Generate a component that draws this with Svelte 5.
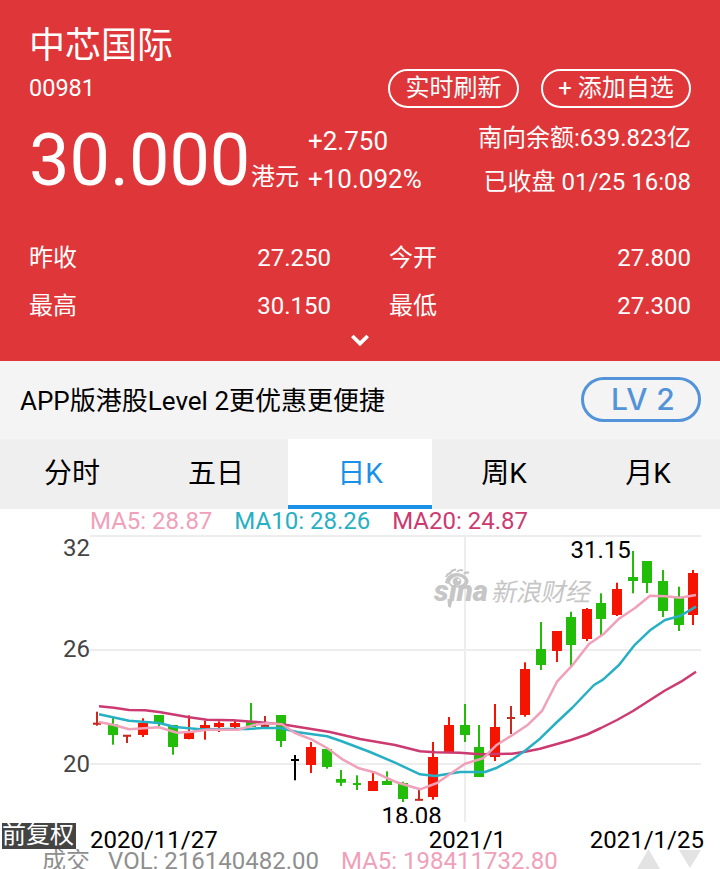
<script>
  const stats = [
    ['昨收', '27.250'], ['今开', '27.800'],
    ['最高', '30.150'], ['最低', '27.300'],
  ];
  const tabs = ['分时', '五日', '日K', '周K', '月K'];
  const active = 2;
  const legend = [
    { text: 'MA5: 28.87', color: '#f0a0b9' },
    { text: 'MA10: 28.26', color: '#27b0c4' },
    { text: 'MA20: 24.87', color: '#cc3a70' },
  ];
  const R = '#f51400', G = '#22bd08', D = '#c82a20', K = '#000';
  // x, wick top, wick bottom, body top, body bottom, colour
  const candles = [
    [97, 711.7, 725.7, 722.6, 724.8, D], [113, 718, 744.7, 724.3, 735, G],
    [127, 735, 743, 734.7, 736.8, D], [143, 718.3, 737, 723, 735, R],
    [159, 715, 726, 715, 723, G], [173, 725, 754.7, 725, 747, G],
    [189, 715.3, 739.3, 732.3, 739, R], [205, 720.7, 739.7, 725, 728.7, R],
    [219, 721.3, 732, 723, 727, R], [235, 720.7, 728, 723, 727, R],
    [251, 703, 727, 721, 727, G], [265, 716, 726.7, 725, 727, D],
    [281, 715, 747, 715, 741, G], [295, 755, 780.3, 759, 761, K],
    [311, 742, 773, 747, 765, R], [327, 749, 768.7, 749, 767, G],
    [341, 770, 786, 779, 782.7, G], [357, 775.3, 790, 783, 785, G],
    [373, 773, 791, 781, 791, R], [387, 771.3, 785, 781, 785, G],
    [403, 781.7, 802, 783, 799, G], [419, 790, 800.3, 798.8, 800.8, D],
    [433, 742, 799.7, 757, 797, R], [449, 717, 752, 725, 752, R],
    [465, 704, 742, 725, 735, G], [479, 725, 777, 747, 777, G],
    [495, 704, 761, 727, 757, R], [511, 706, 734, 717, 719, D],
    [525, 662.3, 716.7, 669, 715, R], [541, 622, 670, 649, 665, G],
    [557, 631, 662, 631, 651, R], [571, 611.7, 667, 617, 645, G],
    [587, 608, 641, 609, 639, R], [601, 593.3, 635, 603, 619, G],
    [617, 582.7, 616, 589, 615, R], [633, 551, 593.3, 577, 581, G],
    [647, 561, 593, 561, 583, G], [663, 570, 617, 581, 611, G],
    [679, 586.7, 631, 597, 625, G], [693, 570, 625, 573, 615, R],
  ];
  const lines = [
    { color: '#cc3a72', pts: '99,706.3 114,707.7 129,710 145,710.3 159,712 175,714.7 189,717.3 207,719.7 233,720.3 265,722.7 285,724.7 330,732 360,739 395,745 420,751.3 435,752.3 460,752.7 480,754.3 512,753.7 525,751.7 540,748.7 557,744 571,740 587,734.5 601,728 617,720 633,711 647,702 665,690.5 681,681.7 696,671.7' },
    { color: '#27b0c4', pts: '99,714.3 129,720.7 159,723 175,727 200,729.3 233,729 248,729 263,728 280,728 298,732.3 327,736.3 341,741 370,752 395,762.7 420,774.3 435,776 460,772 485,772 497,767.7 513,759 525,750.7 540,738.7 556,723 572,708 594,685 603,679.7 619,665 634,645.7 650,630.3 665,620 680,616 696,606.7' },
    { color: '#f0a0b9', pts: '99,722 113,724.7 129,729.3 159,727.3 177,732.7 192,731.7 207,729.7 238,729.7 255,724.7 267,723.3 282,724.3 295,733 312,739.7 327,748 343,759.7 359,768.3 375,772.5 395,781.7 420,789.3 437,783 465,763.7 483,758.3 497,744.7 513,734.7 528,724.7 542,711 557,681.7 572,665.7 589,644 604,633.7 619,618.7 635,608 650,595.7 665,596.3 680,597.7 696,595' },
  ];
</script>

<div class="app">
  <header>
    <div class="name">中芯国际</div>
    <div class="code-row">
      <span class="code">00981</span>
      <button class="refresh">实时刷新</button>
      <button class="add">+ 添加自选</button>
    </div>
    <div class="quote">
      <div class="price">30.000</div>
      <div class="unit">港元</div>
      <div class="change"><span>+2.750</span><span>+10.092%</span></div>
      <div class="info"><span>南向余额:639.823亿</span><span>已收盘 01/25 16:08</span></div>
    </div>
    <div class="stats">
      {#each stats as [label, value]}
        <div class="stat"><span>{label}</span><span>{value}</span></div>
      {/each}
    </div>
    <svg class="chevron" width="20" height="14" viewBox="0 0 20 14"><path d="M2.3 2 10 9.5 17.7 2" fill="none" stroke="#fff" stroke-width="3.8" /></svg>
  </header>

  <div class="promo">
    <span class="slogan">APP版港股Level 2更优惠更便捷</span>
    <span class="lv">LV 2</span>
  </div>

  <nav>
    {#each tabs as tab, i}
      <div class="tab" class:active={i === active}>{tab}</div>
    {/each}
  </nav>

  <div class="legend">
    {#each legend as l}<span style="color:{l.color}">{l.text}</span>{/each}
  </div>

  <svg class="chart" width="720" height="290" viewBox="0 533 720 290">
    <g stroke="#ededed" stroke-width="2">
      <path d="M90 536H701M90 650H701M90 764H701M465 536V822" />
    </g>
    <g class="mark" fill="#c6c6c6">
      <text class="sina" x="434" y="601" textLength="54" lengthAdjust="spacingAndGlyphs">sına</text>
      <path d="M447.5 599H453L450.5 608 448 606.5Z" />
      <path fill-rule="evenodd" d="M445 583C446 574 455 571 462 574 469 577 470 582 467 585 462 589 450 588 449 584ZM450 582C451 587 462 588 465 581 462 575 453 575 450 582Z" />
      <circle cx="457" cy="581.5" r="4.3" />
      <circle cx="458.5" cy="580" r="1.2" fill="#fff" />
      <path d="M446 577Q447 574 450 573M450 574Q451 570 456 569.5M457 572Q459 569 463 570.5M464 574Q466 571.5 469 573" fill="none" stroke="#c6c6c6" stroke-width="2.2" />
      <text class="finance" transform="translate(491 601) skewX(-12)" x="0" y="0" textLength="99">新浪财经</text>
    </g>
    {#each candles as [x, wt, wb, bt, bb, c]}
      <rect x={x - 1} y={wt} width="2" height={wb - wt} fill={c} />
      <rect x={x - (bb - bt < 2.5 ? 4 : 5)} y={bt} width={bb - bt < 2.5 ? 8 : 10} height={bb - bt} fill={c} />
    {/each}
    {#each lines as l}
      <polyline points={l.pts} fill="none" stroke={l.color} stroke-width="2.5" stroke-linejoin="round" />
    {/each}
    <g class="axis">
      <text x="63" y="556">32</text>
      <text x="63" y="657">26</text>
      <text x="63" y="772">20</text>
    </g>
    <text x="570.5" y="558">31.15</text>
    <text x="381.5" y="824">18.08</text>
  </svg>

  <div class="dates">
    <span class="adjust">前复权</span>
    <span class="d1">2020/11/27</span>
    <span class="d2">2021/1</span>
    <span class="d3">2021/1/25</span>
  </div>
  <div class="volume">
    <span class="vt">成交</span>
    <span class="vol">VOL: 216140482.00</span>
    <span class="vma">MA5: 198411732.80</span>
    <svg width="64" height="20" viewBox="0 0 64 20"><path d="M0 20 11.5 0 23 20ZM42 1H64L53 19Z" fill="#e3e3e3" /></svg>
  </div>
</div>

<style>
  :global(body) { background: #fff; overflow: hidden; }
  .app {
    width: 720px; height: 869px; overflow: hidden; background: #fff;
    font-family: Roboto, "Noto Sans CJK SC", sans-serif; font-size: 24px; color: #000;
  }
  span, div { white-space: nowrap; }
  header { height: 361px; box-sizing: border-box; background: #df3639; color: #fff; padding: 24px 29px 0; display: flex; flex-direction: column; }
  .name { font-size: 36px; line-height: 44px; height: 42px; }
  .code-row { display: flex; align-items: center; height: 44px; margin-top: -1px; line-height: 44px; padding-top: 1px; }
  .code { flex: 1; font-size: 23.5px; }
  button {
    height: 39px; box-sizing: border-box; border: 2px solid #fff; border-radius: 20px; background: none;
    color: #fff; font: 24px/34px Roboto, "Noto Sans CJK SC", sans-serif; padding: 0 0 1px; white-space: nowrap;
  }
  .refresh { width: 131px; margin-right: 22px; }
  .add { width: 150px; }
  .quote { display: flex; height: 96px; margin-top: 9px; }
  .price { width: 222px; font-size: 72px; line-height: 84px; }
  .unit { width: 57px; padding-top: 42px; line-height: 32px; }
  .change, .info { display: flex; flex-direction: column; }
  .change { font-size: 26px; line-height: 38px; padding-top: 3px; }
  .info { margin-left: auto; text-align: right; line-height: 44px; margin-top: -3px; }
  .stats { display: grid; grid-template-columns: 302px 302px; column-gap: 58px; margin-top: 19px; line-height: 48px; }
  .stat { display: flex; justify-content: space-between; }
  .chevron { margin: 4px auto 0; }
  .promo { height: 78px; box-sizing: border-box; background: #f4f4f4; display: flex; align-items: center; justify-content: space-between; padding: 0 19px 1px 20px; font-size: 26px; }
  .slogan { line-height: 40px; padding-top: 3px; }
  .lv {
    width: 120px; height: 45px; box-sizing: border-box; border: 3px solid #5393d8; border-radius: 23px;
    font: 500 30px/39px Inter, sans-serif; color: #5393d8; padding-left: 27px; letter-spacing: 0.4px;
  }
  nav { display: flex; height: 70px; background: #efefef; }
  .tab { flex: 1; text-align: center; font-size: 28px; line-height: 70px; box-sizing: border-box; }
  .active { background: #fff; color: #1a90e6; border-bottom: 4px solid #1a90e6; }
  .legend { display: flex; gap: 22px; padding-left: 90px; height: 24px; line-height: 25px; }
  .chart { display: block; font-size: 24px; }
  .axis { fill: #444; }
  .sina { font: italic 900 29px Roboto, sans-serif; }
  .finance { font: 25px "Noto Sans CJK SC", sans-serif; }
  .dates { display: flex; height: 26px; line-height: 34px; }
  .adjust { width: 74px; height: 26px; line-height: 24px; margin-left: 2px; background: #444; color: #fff; }
  .d1 { margin-left: 14px; }
  .d2 { margin-left: 211px; }
  .d3 { margin-left: auto; margin-right: 16px; }
  .volume { display: flex; height: 20px; line-height: 24px; color: #8f8f8f; overflow: hidden; }
  .vt { margin-left: 42px; }
  .vol { margin-left: 18px; }
  .vma { margin-left: 22px; color: #f0a0b9; }
  .volume svg { margin-left: auto; margin-right: 19px; }
</style>
